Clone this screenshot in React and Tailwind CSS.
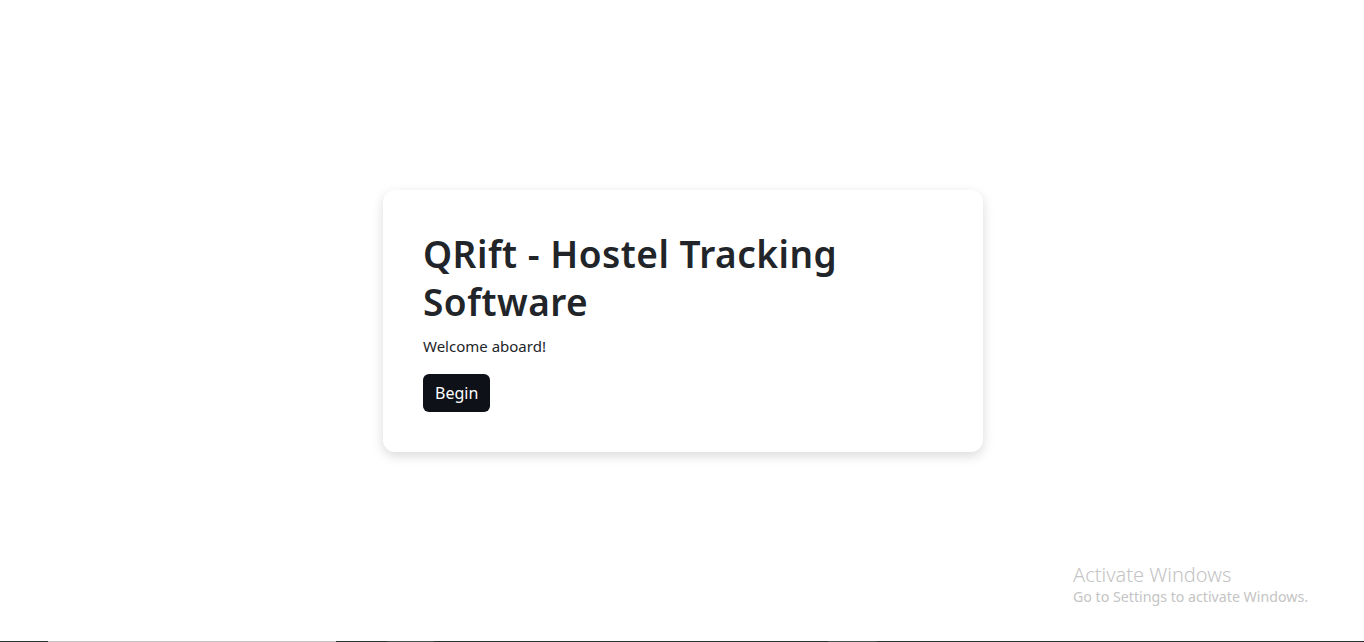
export default function App() {
  return (
    <div className="relative h-[642px] w-full overflow-hidden bg-white" style={{ fontFamily: '"Noto Sans", "Open Sans", sans-serif' }}>
      <div className="flex h-[641px] items-center justify-center pl-[2px]">
        <div className="w-[600px] rounded-xl bg-white p-10 shadow-[0_4px_12px_rgba(0,0,0,0.15)]">
          <h1 className="mb-2 text-[37px] font-semibold leading-[48px] tracking-[0.5px] text-[#212529]">
            QRift - Hostel Tracking Software
          </h1>
          <p className="text-[15px] leading-6 text-[#212529]">Welcome aboard!</p>
          <button className="mt-4 h-[38px] rounded-md bg-[#0e1117] px-3 text-[16px] text-white">
            Begin
          </button>
        </div>
      </div>
      <div className="flex h-px w-full">
        <div className="w-[48px] bg-[#2b2f33]" />
        <div className="w-[288px] bg-[#c2c2c2]" />
        <div className="w-[51px] bg-[#2b2f33]" />
        <div className="w-[47px] bg-[#4a4e52]" />
        <div className="w-[394px] bg-[#2b2f33]" />
        <div className="w-[49px] bg-[#4a4e52]" />
        <div className="flex-1 bg-[#2b2f33]" />
      </div>
      <div className="absolute left-[1073px] top-[563px] text-[#c4c4c4]" style={{ fontFamily: '"Noto Sans", sans-serif' }}>
        <div className="text-[20px] font-light leading-6">Activate Windows</div>
        <div className="text-[14.2px] leading-5">Go to Settings to activate Windows.</div>
      </div>
    </div>
  );
}
